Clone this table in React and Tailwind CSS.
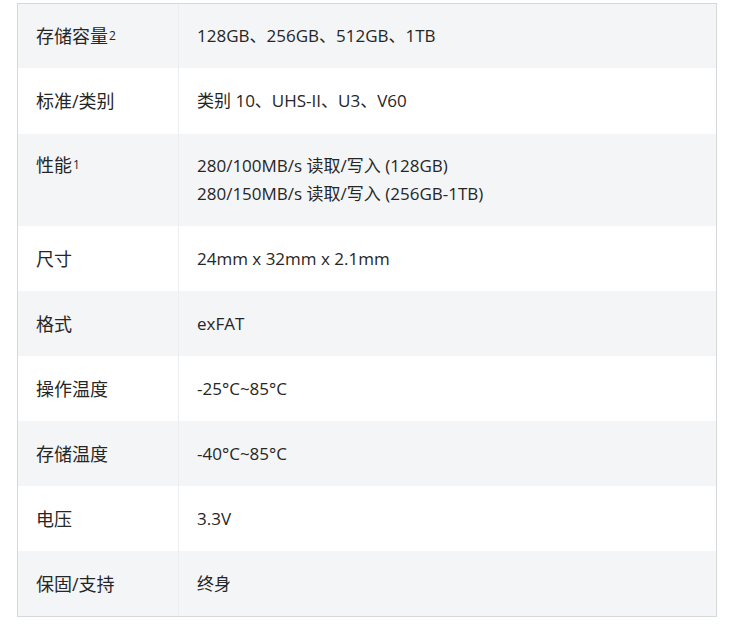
import React from 'react';

const rows = [
  { label: '存储容量', sup: '2', values: ['128GB、256GB、512GB、1TB'], h: 'h-[64px]' },
  { label: '标准/类别', values: ['类别 10、UHS-II、U3、V60'], h: 'h-[66px]' },
  { label: '性能', sup: '1', values: ['280/100MB/s 读取/写入 (128GB)', '280/150MB/s 读取/写入 (256GB-1TB)'], h: 'h-[92px]', top: true },
  { label: '尺寸', values: ['24mm x 32mm x 2.1mm'], h: 'h-[65px]' },
  { label: '格式', values: ['exFAT'], h: 'h-[65px]' },
  { label: '操作温度', values: ['-25°C~85°C'], h: 'h-[65px]' },
  { label: '存储温度', values: ['-40°C~85°C'], h: 'h-[65px]' },
  { label: '电压', values: ['3.3V'], h: 'h-[65px]' },
  { label: '保固/支持', values: ['终身'], h: 'h-[65px]' },
];

const font = { fontFamily: '"Open Sans", "Noto Sans CJK SC", sans-serif' };

export default function App() {
  return (
    <div className="w-[750px] h-[627px] bg-white pt-[3px] pl-[17px]" style={font}>
      <div className="w-[700px] border border-[#d6d8db] flex flex-col text-[#262626]">
        {rows.map((row, i) => (
          <div
            key={row.label}
            className={`flex ${row.h} ${i % 2 === 0 ? 'bg-[#f4f5f7]' : 'bg-white'}`}
          >
            <div
              className={`w-[161px] shrink-0 pl-[18px] border-r border-[#ebedf0] flex ${row.top ? 'items-start pt-[17px]' : 'items-center'} text-[18px] leading-[28px]`}
            >
              <span>
                {row.label}
                {row.sup && <sup className="text-[12px] relative -top-[3px] ml-[1px]">{row.sup}</sup>}
              </span>
            </div>
            <div
              className={`flex-1 pl-[18px] flex flex-col ${row.top ? 'justify-start pt-[18px]' : 'justify-center'} text-[17px] leading-[28px]`}
            >
              {row.values.map(v => (
                <div key={v}>{v}</div>
              ))}
            </div>
          </div>
        ))}
      </div>
    </div>
  );
}
